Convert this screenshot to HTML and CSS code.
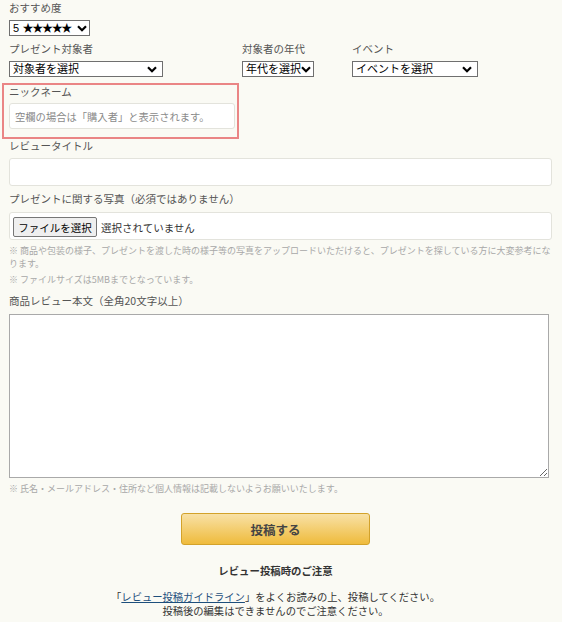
FILE: index.html
```html
<!DOCTYPE html>
<html lang="ja">
<head>
<meta charset="utf-8">
<link rel="stylesheet" href="styles.css">
</head>
<body>
<form class="review-form">
  <div class="field">
    <div class="label">おすすめ度</div>
    <select class="sel sel-rate"><option>5 ★★★★★</option></select>
  </div>

  <div class="row3">
    <div class="field">
      <div class="label">プレゼント対象者</div>
      <select class="sel sel-target"><option>対象者を選択</option></select>
    </div>
    <div class="field">
      <div class="label">対象者の年代</div>
      <select class="sel sel-age"><option>年代を選択</option></select>
    </div>
    <div class="field">
      <div class="label">イベント</div>
      <select class="sel sel-event"><option>イベントを選択</option></select>
    </div>
  </div>

  <div class="nick-box">
    <div class="label">ニックネーム</div>
    <input class="text-input" type="text" placeholder="空欄の場合は「購入者」と表示されます。">
  </div>

  <div class="field title-field">
    <div class="label">レビュータイトル</div>
    <input class="text-input wide" type="text">
  </div>

  <div class="field photo-field">
    <div class="label">プレゼントに関する写真（必須ではありません）</div>
    <div class="file-box">
      <button type="button" class="file-btn">ファイルを選択</button>
      <span class="file-text">選択されていません</span>
    </div>
    <p class="note">※ 商品や包装の様子、プレゼントを渡した時の様子等の写真をアップロードいただけると、プレゼントを探している方に大変参考になります。</p>
    <p class="note note2">※ ファイルサイズは5MBまでとなっています。</p>
  </div>

  <div class="field body-field">
    <div class="label">商品レビュー本文（全角20文字以上）</div>
    <textarea class="body-text"></textarea>
    <p class="note note3">※ 氏名・メールアドレス・住所など個人情報は記載しないようお願いいたします。</p>
  </div>

  <div class="submit-row">
    <button type="button" class="submit-btn">投稿する</button>
  </div>

  <div class="caution">
    <div class="caution-title">レビュー投稿時のご注意</div>
    <p class="caution-text">「<a href="#" class="guide-link">レビュー投稿ガイドライン</a>」をよくお読みの上、投稿してください。<br>投稿後の編集はできませんのでご注意ください。</p>
  </div>
</form>
</body>
</html>
```

FILE: styles.css
```css
* { box-sizing: border-box; }

body {
  margin: 0;
  background: #fafaf4;
  font-family: "Noto Sans CJK JP", "Noto Sans", sans-serif;
  font-size: 10.5px;
  color: #555;
}

.review-form {
  padding: 1px 10px 0 9px;
  width: 562px;
}

.label {
  line-height: 14px;
  height: 14px;
  color: #555;
  margin-bottom: 5px;
  white-space: nowrap;
}

.field { display: flex; flex-direction: column; align-items: flex-start; }

.sel {
  -webkit-appearance: none;
  appearance: none;
  height: 16px;
  font-family: "Liberation Sans", "Noto Sans CJK JP", sans-serif;
  font-size: 11px;
  line-height: 14px;
  color: #000;
  background-color: #fff;
  background-image: url("data:image/svg+xml;utf8,<svg xmlns='http://www.w3.org/2000/svg' width='10' height='7' viewBox='0 0 10 7'><path d='M1 1.2 L5 5.2 L9 1.2' fill='none' stroke='black' stroke-width='2.2'/></svg>");
  background-repeat: no-repeat;
  background-position: right 5px center;
  border: 1px solid #6f6f6f;
  border-radius: 0;
  padding: 0 18px 0 3px;
  margin: 0;
  overflow: hidden;
  white-space: nowrap;
}
.sel-rate {
  width: 81px;
  letter-spacing: -1.3px;
  word-spacing: 3px;
  padding-right: 12px;
  background-position: right 2px center;
}
.sel-target { width: 154px; }
.sel-age { width: 72px; padding-right: 12px; background-position: right 2px center; }
.sel-event { width: 126px; }

.row3 {
  display: grid;
  grid-template-columns: 233px 110px auto;
  margin-top: 6px;
}

.nick-box {
  margin: 6px 0 0 -7px;
  width: 237px;
  border: 2px solid #ea8585;
  padding: 0 2px 8px 5px;
}
.nick-box .label { margin-bottom: 4px; }

.text-input {
  display: block;
  width: 100%;
  height: 26px;
  background: #fff;
  border: 1px solid #e3e3dc;
  border-radius: 3px;
  padding: 0 5px;
  font-family: "Noto Sans CJK JP", sans-serif;
  font-size: 10.3px;
  color: #333;
  outline: none;
}
.text-input::placeholder { color: #8a8a8a; }
.text-input.wide { height: 28px; }

.title-field { margin-top: 0; }
.title-field .label { margin-bottom: 5px; }
.photo-field { margin-top: 6px; }
.photo-field .label { margin-bottom: 6px; }

.file-box {
  width: 100%;
  height: 28px;
  background: #fff;
  border: 1px solid #e3e3dc;
  border-radius: 3px;
  display: flex;
  align-items: center;
  padding: 0 0 0 3px;
}
.file-btn {
  height: 20px;
  width: 84px;
  margin-top: 2px;
  padding: 0;
  font-family: "Noto Sans CJK JP", sans-serif;
  font-size: 10.5px;
  color: #000;
  background: #efefef;
  border: 1px solid #767676;
  border-radius: 2px;
}
.file-text {
  margin-left: 4px;
  margin-top: 2px;
  color: #333;
  font-size: 10.5px;
}

.note {
  margin: 4px 0 0;
  font-size: 9px;
  line-height: 13px;
  color: #a8a8a8;
}
.note2 { margin-top: 3px; }

.body-field { margin-top: 8px; }
.body-field .label { margin-bottom: 6px; }
.body-text {
  display: block;
  width: 540px;
  height: 164px;
  border: 1px solid #a9a9a9;
  background: #fff;
  border-radius: 0;
  margin: 0;
  resize: both;
}
.note3 { margin-top: 4px; }

.submit-row {
  margin-top: 18px;
  padding-left: 172px;
}
.submit-btn {
  width: 189px;
  height: 32px;
  border: 1px solid #d3a22a;
  border-radius: 3px;
  background: linear-gradient(#f8e1a6, #efbb3c);
  font-family: "Noto Sans CJK JP", sans-serif;
  font-size: 12.5px;
  font-weight: bold;
  color: #444;
}

.caution {
  text-align: center;
  padding-right: 10px;
  margin-top: 18px;
}
.caution-title {
  font-weight: bold;
  font-size: 10.4px;
  line-height: 16px;
  color: #333;
}
.caution-text {
  margin: 11px 0 0;
  font-size: 10.3px;
  line-height: 14px;
  color: #333;
}
.guide-link { color: #1d4f7c; text-decoration: underline; }
```
